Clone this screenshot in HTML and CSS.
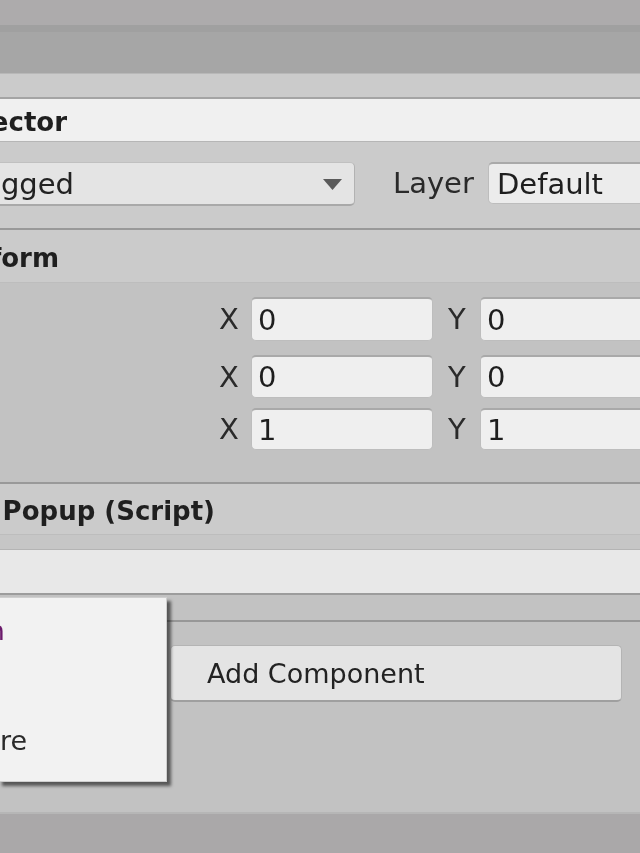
FILE: index.html
```html
<!DOCTYPE html>
<html>
<head>
<meta charset="utf-8">
<link rel="stylesheet" href="styles.css">
</head>
<body>
<div class="screen">
  <div class="topbar"></div>
  <div class="tabstrip"></div>
  <div class="inspector-tab"></div>
  <div class="titlebar">
    <div class="pin pin-title"><span class="bold">Inspector</span></div>
  </div>
  <div class="objrow">
    <div class="dropdown">
      <div class="pin pin-tag"><span>Untagged</span></div>
      <svg class="arrow" width="19" height="11" viewBox="0 0 19 11"><path d="M0 0H19L9.5 11Z" fill="#5a5a5a"/></svg>
    </div>
    <span class="label layer-label">Layer</span>
    <div class="field layer-field">Default</div>
  </div>
  <div class="comp-header">
    <div class="pin pin-transform"><span class="bold">Transform</span></div>
  </div>
  <div class="comp-body">
    <div class="vrow r1">
      <span class="axis">X</span><div class="field num">0</div>
      <span class="axis axis-y">Y</span><div class="field num wide">0</div>
    </div>
    <div class="vrow r2">
      <span class="axis">X</span><div class="field num">0</div>
      <span class="axis axis-y">Y</span><div class="field num wide">0</div>
    </div>
    <div class="vrow r3">
      <span class="axis">X</span><div class="field num">1</div>
      <span class="axis axis-y">Y</span><div class="field num wide">1</div>
    </div>
  </div>
  <div class="comp-header script-header">
    <div class="pin pin-script"><span class="bold">Popup (Script)</span></div>
  </div>
  <div class="script-gap"></div>
  <div class="script-bar"></div>
  <div class="below"></div>
  <div class="add-area">
    <div class="add-btn">Add Component</div>
  </div>
  <div class="footer"></div>

  <div class="menu">
    <div class="pin pin-item1"><span class="item purple">Button</span></div>
    <div class="pin pin-item2"><span class="item">Texture</span></div>
  </div>
</div>
</body>
</html>
```

FILE: styles.css
```css
html, body {
  margin: 0;
  padding: 0;
  background: #c2c2c2;
}
body {
  font-family: "DejaVu Sans", "Liberation Sans", sans-serif;
  color: #222;
}
.screen {
  position: relative;
  width: 640px;
  height: 853px;
  overflow: hidden;
  background: #c2c2c2;
  filter: blur(0.6px);
}
.topbar {
  height: 25px;
  background: #adabac;
}
.tabstrip {
  height: 41px;
  background: #a6a6a6;
  border-top: 7px solid #a0a0a0;
}
.inspector-tab {
  height: 24px;
  background: #cbcbcb;
  border-top: 1px solid #b8b8b8;
  box-sizing: border-box;
}
.titlebar {
  height: 42px;
  background: #f0f0f0;
  border-top: 2px solid #a4a4a4;
  border-bottom: 1px solid #b6b6b6;
  display: flex;
  align-items: center;
}
.pin {
  display: flex;
  justify-content: flex-end;
  white-space: nowrap;
  overflow: visible;
  flex-shrink: 0;
}
.bold {
  font-weight: bold;
  font-size: 26px;
  color: #1f1f1f;
}
.pin-title { width: 67px; margin-top: 4px; }
.objrow {
  height: 86px;
  background: #cbcbcb;
  display: flex;
  align-items: flex-start;
  padding-top: 20px;
  box-sizing: border-box;
}
.dropdown {
  flex-shrink: 0;
  margin-left: -30px;
  width: 385px;
  height: 44px;
  box-sizing: border-box;
  background: #e4e4e4;
  border: 1px solid #b2b2b2;
  border-top-color: #c0c0c0;
  border-bottom: 2px solid #a9a9a9;
  border-radius: 5px;
  display: flex;
  align-items: center;
}
.pin-tag {
  width: 103px;
  font-size: 29px;
  color: #222;
}
.arrow {
  margin-left: auto;
  margin-right: 12px;
  margin-top: 1px;
  flex-shrink: 0;
}
.label {
  font-size: 29px;
  color: #2a2a2a;
  flex-shrink: 0;
}
.layer-label {
  margin-left: 38px;
  margin-top: 4px;
  width: 95px;
}
.field {
  flex-shrink: 0;
  background: #efefef;
  border: 1px solid #bdbdbd;
  border-top: 2px solid #a9a9a9;
  border-radius: 5px;
  box-sizing: border-box;
  font-size: 29px;
  color: #1e1e1e;
  display: flex;
  align-items: center;
}
.layer-field {
  width: 200px;
  height: 42px;
  padding-left: 8px;
  background: #ececec;
}
.comp-header {
  height: 52px;
  background: #cbcbcb;
  border-top: 2px solid #999;
  border-bottom: 1px solid #bdbdbd;
  display: flex;
  align-items: center;
}
.pin-transform { width: 59px; margin-top: 4px; }
.comp-body {
  height: 199px;
  background: #c2c2c2;
  padding-top: 14px;
  box-sizing: border-box;
}
.vrow {
  display: flex;
  align-items: center;
  height: 44px;
}
.r2 { margin-top: 14px; height: 43px; }
.r3 { margin-top: 10px; height: 42px; }
.axis {
  flex-shrink: 0;
  font-size: 29px;
  color: #2a2a2a;
  margin-left: 219px;
  width: 32px;
}
.axis-y {
  margin-left: 15px;
  width: 32px;
}
.num {
  width: 182px;
  height: 100%;
  padding-left: 6px;
}
.wide {
  width: 200px;
}
.script-header {
  height: 50px;
}
.pin-script { width: 215px; margin-top: 4px; }
.script-gap {
  height: 15px;
  background: #c6c6c6;
  border-bottom: 1px solid #b4b4b4;
  box-sizing: border-box;
}
.script-bar {
  height: 45px;
  background: #e8e8e8;
  border-bottom: 2px solid #9c9c9c;
  box-sizing: border-box;
}
.below {
  height: 25px;
  background: #c2c2c2;
}
.add-area {
  height: 192px;
  background: #c2c2c2;
  border-top: 2px solid #979797;
  padding-top: 23px;
  box-sizing: border-box;
}
.add-btn {
  margin-left: 170px;
  width: 452px;
  height: 57px;
  box-sizing: border-box;
  background: #e4e4e4;
  border: 1px solid #b4b4b4;
  border-bottom: 2px solid #9f9f9f;
  border-radius: 5px;
  font-size: 27px;
  color: #222;
  display: flex;
  align-items: center;
  padding-left: 36px;
}
.footer {
  height: 41px;
  background: #aaa8a9;
  border-top: 2px solid #b6b6b6;
}
.menu {
  position: absolute;
  left: -2px;
  top: 597px;
  width: 169px;
  height: 185px;
  background: #f2f2f2;
  border: 1px solid #cfcfcf;
  box-sizing: border-box;
  box-shadow: 4px 4px 3px rgba(0, 0, 0, 0.55);
}
.item {
  font-size: 27px;
  color: #2b2b2b;
}
.purple { color: #6b1a6b; }
.pin-item1 { width: 6px; margin-top: 17px; }
.pin-item2 { width: 28px; margin-top: 79px; }
```
